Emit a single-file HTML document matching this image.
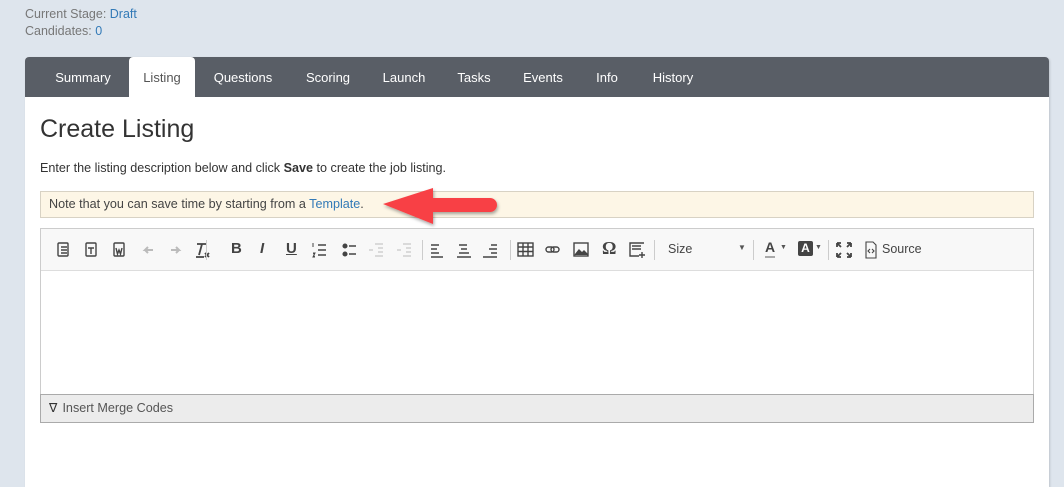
<!DOCTYPE html>
<html><head><style>
*{box-sizing:border-box;margin:0;padding:0}
body{width:1064px;height:475px;overflow:hidden;background:#dee5ed;font-family:"Liberation Sans",sans-serif;position:relative;color:#333}
.a{position:absolute}
.meta{left:25px;font-size:12.5px;color:#777}
.meta span{color:#337ab7}
#panel{left:25px;top:57px;width:1024px;height:430px;background:#fff;border-radius:4px 4px 0 0;box-shadow:1px 1px 2px rgba(0,0,0,.15)}
#tabs{left:0;top:0;width:1024px;height:40px;background:#595e66;border-radius:4px 4px 0 0}
.tab{position:absolute;top:0;height:40px;line-height:41px;font-size:13px;color:#fff;text-align:center}
.tab.on{background:#fff;color:#555;border-radius:4px 4px 0 0}
.ic{position:absolute;top:11px;font-size:15px;color:#444;font-weight:bold}
.sep{position:absolute;top:11px;width:1px;height:20px;background:#ccc}
</style></head><body>
<div class="a meta" style="top:7px">Current Stage: <span>Draft</span></div>
<div class="a meta" style="top:24px">Candidates: <span>0</span></div>
<div class="a" id="panel">
 <div class="a" id="tabs">
  <div class="tab" style="left:18px;width:80px">Summary</div>
  <div class="tab on" style="left:104px;width:66px">Listing</div>
  <div class="tab" style="left:180px;width:76px">Questions</div>
  <div class="tab" style="left:272px;width:62px">Scoring</div>
  <div class="tab" style="left:350px;width:58px">Launch</div>
  <div class="tab" style="left:424px;width:50px">Tasks</div>
  <div class="tab" style="left:490px;width:56px">Events</div>
  <div class="tab" style="left:562px;width:40px">Info</div>
  <div class="tab" style="left:618px;width:60px">History</div>
 </div>
 <div class="a" style="left:15px;top:58px;font-size:25px;color:#333">Create Listing</div>
 <div class="a" style="left:15px;top:104px;font-size:12.6px;color:#333">Enter the listing description below and click <b>Save</b> to create the job listing.</div>
 <div class="a" style="left:15px;top:134px;width:994px;height:27px;background:#fdf6e6;border:1px solid #d8d2c4;font-size:12.6px;line-height:25px;padding-left:8px;color:#444">Note that you can save time by starting from a <span style="color:#337ab7">Template</span>.</div>
 <div class="a" style="left:15px;top:171px;width:994px;height:195px;border:1px solid #ccc">
  <div class="a" style="left:0;top:0;width:992px;height:42px;background:#f8f8f8;border-bottom:1px solid #ddd">
   <svg class="a" style="left:14px;top:10px" width="600" height="22" fill="none" stroke="#444" stroke-width="1.4">
    <rect x="3" y="4" width="10" height="13" rx="1"/><path d="M6 8h6M6 11h6M6 14h6"/>
    <rect x="31" y="4" width="10" height="13" rx="1"/><path d="M33 9h6M36 9v6"/>
    <rect x="59" y="4" width="10" height="13" rx="1"/><path d="M61 9l1.5 6 1.5-4 1.5 4 1.5-6"/>
    <path d="M98 11h-8l3-3M90 11l3 3" stroke="#bbb" stroke-width="2"/>
    <path d="M116 11h8l-3-3M124 11l-3 3" stroke="#bbb" stroke-width="2"/>
    <path d="M142 5h10M147 5l-3 11M141 18h8M150 14l4 4M154 14l-4 4" stroke-width="1.8"/>
   </svg>
   <div class="sep" style="left:165px"></div>
   <div class="ic" style="left:190px">B</div>
   <div class="ic" style="left:219px;font-style:italic">I</div>
   <div class="ic" style="left:245px;text-decoration:underline">U</div>
   <svg class="a" style="left:270px;top:12px" width="120" height="18" stroke="#444" stroke-width="1.5">
    <path d="M7 4h8M7 9h8M7 14h8"/><path d="M2 2v4M2 12h2l-2 4h2" stroke-width="1"/>
    <circle cx="34" cy="5" r="1.8" fill="#444"/><circle cx="34" cy="13" r="1.8" fill="#444"/><path d="M38 5h7M38 13h7"/>
    <path d="M64 3h8M67 7h5M67 11h5M64 15h8M58 9h4" stroke="#bbb" stroke-width="1"/>
    <path d="M92 3h8M95 7h5M95 11h5M92 15h8M86 9h4" stroke="#bbb" stroke-width="1"/>
   </svg>
   <div class="sep" style="left:381px"></div>
   <svg class="a" style="left:386px;top:12px" width="90" height="18" stroke="#444" stroke-width="1.6">
    <path d="M4 4h8M4 8h6M4 12h8M4 16h12"/>
    <path d="M32 4h8M34 8h6M32 12h10M30 16h14"/>
    <path d="M64 4h6M62 8h8M64 12h6M56 16h14"/>
   </svg>
   <div class="sep" style="left:469px"></div>
   <svg class="a" style="left:475px;top:10px" width="140" height="22" stroke="#444" stroke-width="1.4" fill="none">
    <rect x="2" y="4" width="15" height="13"/><path d="M2 8h15M2 12.5h15M7 4v13M12 4v13"/>
    <rect x="30" y="8" width="8" height="5" rx="2.5"/><rect x="35" y="8" width="8" height="5" rx="2.5"/>
    <rect x="58" y="4" width="14" height="13"/><path d="M59 16l4-5 3 3 2-2 4 4" fill="#444"/>
    <path d="M128 4h-14v13h9M126 13v6M123 16h6M116 7h9M116 10h9"/>
   </svg>
   <div class="ic" style="left:561px;font-family:'Liberation Serif',serif;font-size:18px;top:9px">Ω</div>
   <div class="sep" style="left:613px"></div>
   <div class="a" style="left:627px;top:13px;font-size:12.5px;color:#444">Size</div>
   <div class="a" style="left:697px;top:14px;font-size:8px;color:#555">▼</div>
   <div class="sep" style="left:712px"></div>
   <div class="ic" style="left:724px;font-size:14px;border-bottom:2px solid #aaa;line-height:14px;height:18px">A</div>
   <div class="a" style="left:739px;top:15px;font-size:7px;color:#555">▼</div>
   <div class="a" style="left:757px;top:12px;width:15px;height:15px;background:#444;color:#fff;font-size:12px;font-weight:bold;text-align:center;line-height:15px;border-radius:2px">A</div>
   <div class="a" style="left:774px;top:15px;font-size:7px;color:#555">▼</div>
   <div class="sep" style="left:787px"></div>
   <svg class="a" style="left:794px;top:12px" width="18" height="18" stroke="#444" stroke-width="1.8" fill="none">
    <path d="M2 2l4 4M2 2h4M2 2v4M16 2l-4 4M16 2h-4M16 2v4M2 16l4-4M2 16h4M2 16v-4M16 16l-4-4M16 16h-4M16 16v-4"/>
   </svg>
   <svg class="a" style="left:823px;top:12px" width="14" height="18" stroke="#444" stroke-width="1.1" fill="none">
    <path d="M2 1h7l3 3v13H2zM6 8l-2 2 2 2M8 8l2 2-2 2"/>
   </svg>
   <div class="a" style="left:841px;top:13px;font-size:12.5px;color:#444">Source</div>
  </div>
  <div class="a" style="left:-1px;top:165px;width:994px;height:29px;background:#ececec;border:1px solid #aaa;font-size:12.6px;line-height:27px;padding-left:8px;color:#555"><span style="color:#333;margin-right:5px">∇</span>Insert Merge Codes</div>
 </div>
</div>
<svg class="a" style="left:380px;top:186px" width="125" height="42">
 <defs><filter id="s"><feDropShadow dx="1" dy="2" stdDeviation="1.5" flood-opacity=".35"/></filter></defs>
 <path d="M3 18L53 2V12H110a7 7 0 0 1 0 14H53V38Z" fill="#f84044" filter="url(#s)"/>
</svg>
</body></html>
